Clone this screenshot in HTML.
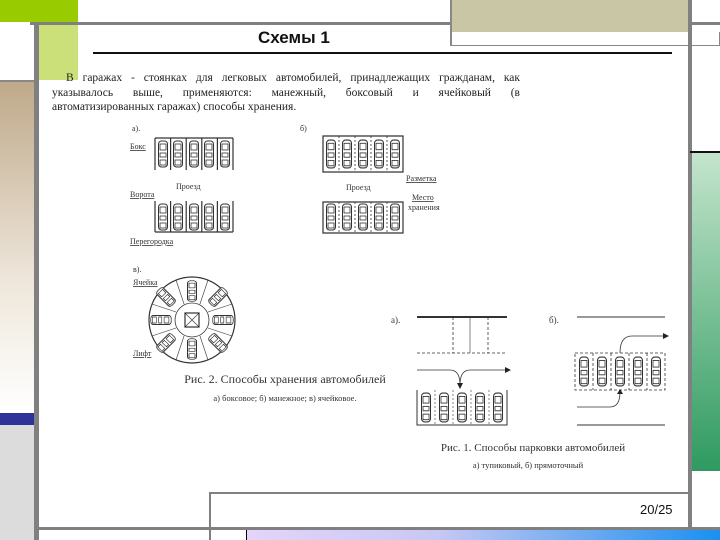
<!DOCTYPE html>
<html><head><meta charset="utf-8"><style>
html,body{margin:0;padding:0;}
body{width:720px;height:540px;position:relative;overflow:hidden;background:#fff;font-family:"Liberation Sans",sans-serif;}
div{position:absolute;}
.ln{left:52px;width:468px;font-size:11.5px;text-align:justify;text-align-last:justify;white-space:nowrap;line-height:14px;font-family:"Liberation Serif",serif;color:#222;}
</style></head><body>
<div style="left:0;top:0;width:78px;height:22px;background:#99cc00"></div>
<div style="left:30px;top:22px;width:690px;height:3px;background:#808080"></div>
<div style="left:450px;top:0;width:238px;height:32px;background:#c9c6a6"></div>
<div style="left:450px;top:32px;width:270px;height:14px;border:1px solid #888;border-top:none;box-sizing:border-box"></div>
<div style="left:450px;top:0;width:2px;height:46px;background:#888"></div>
<div style="left:688px;top:0;width:4px;height:540px;background:#808080"></div>
<div style="left:690px;top:151px;width:30px;height:2px;background:#111"></div>
<div style="left:692px;top:153px;width:28px;height:318px;background:linear-gradient(#c4e5cc,#2e9a60)"></div>
<div style="left:0;top:80px;width:34px;height:2px;background:#888"></div>
<div style="left:0;top:82px;width:34px;height:330px;background:linear-gradient(#bfa98a,#eee6da 60%,#fff)"></div>
<div style="left:0;top:413px;width:34px;height:12px;background:#2e3399"></div>
<div style="left:0;top:425px;width:34px;height:115px;background:#dcdcdc"></div>
<div style="left:34px;top:24px;width:5px;height:516px;background:#808080"></div>
<div style="left:39px;top:25px;width:39px;height:55px;background:#cce07a"></div>
<div style="left:39px;top:527px;width:681px;height:3px;background:#808080"></div>
<div style="left:210px;top:492px;width:479px;height:2px;background:#808080"></div>
<div style="left:209px;top:492px;width:2px;height:48px;background:#808080"></div>
<div style="left:247px;top:530px;width:473px;height:10px;background:linear-gradient(90deg,#e4d4f8,#c8c8f4 40%,#1a90f0)"></div>
<div style="left:246px;top:530px;width:1px;height:10px;background:#000"></div>
<div style="left:640px;top:502px;font-size:13px;color:#111">20/25</div>
<div style="left:258px;top:28px;font-size:17px;font-weight:bold;color:#111">Схемы 1</div>
<div style="left:93px;top:52px;width:579px;height:2px;background:#111"></div>
<div class="ln" style="top:71px;text-indent:14px">В гаражах - стоянках для легковых автомобилей, принадлежащих гражданам, как</div>
<div class="ln" style="top:86px">указывалось выше, применяются: манежный, боксовый и ячейковый (в</div>
<div class="ln" style="top:100px;text-align-last:left">автоматизированных гаражах) способы хранения.</div>
<svg style="position:absolute;left:0;top:0" width="720" height="540" font-family="Liberation Serif, serif" fill="none" stroke="#333">
<defs>
<symbol id="car" viewBox="0 0 12 28" preserveAspectRatio="none"><rect x="1.5" y="1" width="9" height="26" rx="3" stroke="#333" fill="#fff" stroke-width="1"/><rect x="3" y="4" width="6" height="6" stroke="#333" stroke-width="0.8"/><rect x="3" y="13" width="6" height="4" stroke="#333" stroke-width="0.8"/><rect x="3" y="20" width="6" height="5" stroke="#333" stroke-width="0.8"/></symbol>
</defs>
<g stroke-width="1.2">
<path d="M155 138H233M155 138V170M233 138V170M170.6 138V170M186.2 138V170M201.8 138V170M217.4 138V170"/>
<path d="M155 232H233M155 201V232M233 201V232M170.6 201V232M186.2 201V232M201.8 201V232M217.4 201V232"/>
<path d="M323 136H403V172H323Z"/>
<path d="M339 136V172M355 136V172M371 136V172M387 136V172" stroke-dasharray="2 2" stroke-width="0.8"/>
<path d="M323 202H403V233H323Z"/>
<path d="M339 202V233M355 202V233M371 202V233M387 202V233" stroke-dasharray="2 2" stroke-width="0.8"/>
<circle cx="192" cy="320" r="43"/>
<circle cx="192" cy="320" r="17" stroke-width="0.8"/>
<rect x="185" y="313" width="14" height="14"/>
<path d="M185 313L199 327M199 313L185 327" stroke-width="0.6"/>
<g stroke-width="0.6">
<path d="M200 304L208 280M184 336L176 360M208 312L232 304M176 328L152 336M184 304L176 280M200 336L208 360M176 312L152 304M208 328L232 336"/>
</g>
<path d="M417 317H507" stroke-width="2"/>
<path d="M417 353H507M453 317V353M488 317V353" stroke-dasharray="3 2" stroke-width="0.8"/>
<path d="M470 317V353" stroke-width="0.6"/>
<path d="M417 370H450Q460 370 460 385M460 385Q460 370 470 370H505" stroke-width="0.8"/>
<path d="M417 390V425H507V390" stroke-width="1"/>
<path d="M435 390V425M453 390V425M471 390V425M489 390V425" stroke-dasharray="2 2" stroke-width="0.6"/>
<path d="M577 317H665" stroke-width="1"/>
<path d="M577 425H665" stroke-width="1"/>
<path d="M575 353H665V390H575Z M593 353V390M611 353V390M629 353V390M647 353V390" stroke-dasharray="3 2" stroke-width="0.8"/>
<path d="M620 353Q620 336 632 336H663" stroke-width="0.8"/>
<path d="M577 407H610Q620 407 620 392" stroke-width="0.8"/>
</g>
<g fill="#222" stroke="none">
<path d="M505 367L511 370L505 373Z M663 333L669 336L663 339Z M457 383L460 389L463 383Z M617 394L620 389L623 394Z"/>
</g>
<g>
<use href="#car" x="157" y="140" width="12" height="28"/><use href="#car" x="172" y="140" width="12" height="28"/><use href="#car" x="188" y="140" width="12" height="28"/><use href="#car" x="203" y="140" width="12" height="28"/><use href="#car" x="219" y="140" width="12" height="28"/>
<use href="#car" x="157" y="203" width="12" height="28"/><use href="#car" x="172" y="203" width="12" height="28"/><use href="#car" x="188" y="203" width="12" height="28"/><use href="#car" x="203" y="203" width="12" height="28"/><use href="#car" x="219" y="203" width="12" height="28"/>
<use href="#car" x="325" y="139" width="12" height="30"/><use href="#car" x="341" y="139" width="12" height="30"/><use href="#car" x="357" y="139" width="12" height="30"/><use href="#car" x="373" y="139" width="12" height="30"/><use href="#car" x="389" y="139" width="12" height="30"/>
<use href="#car" x="325" y="203" width="12" height="28"/><use href="#car" x="341" y="203" width="12" height="28"/><use href="#car" x="357" y="203" width="12" height="28"/><use href="#car" x="373" y="203" width="12" height="28"/><use href="#car" x="389" y="203" width="12" height="28"/>
<use href="#car" x="420" y="392" width="12" height="31"/><use href="#car" x="438" y="392" width="12" height="31"/><use href="#car" x="456" y="392" width="12" height="31"/><use href="#car" x="474" y="392" width="12" height="31"/><use href="#car" x="492" y="392" width="12" height="31"/>
<use href="#car" x="578" y="356" width="12" height="31"/><use href="#car" x="596" y="356" width="12" height="31"/><use href="#car" x="614" y="356" width="12" height="31"/><use href="#car" x="632" y="356" width="12" height="31"/><use href="#car" x="650" y="356" width="12" height="31"/>
<use href="#car" x="186" y="280" width="12" height="22"/><use href="#car" x="186" y="338" width="12" height="22"/>
<use href="#car" x="155" y="309" width="12" height="22" transform="rotate(90 161 320)"/>
<use href="#car" x="217" y="309" width="12" height="22" transform="rotate(90 223 320)"/>
<use href="#car" x="160" y="286" width="12" height="22" transform="rotate(-45 166 297)"/>
<use href="#car" x="212" y="286" width="12" height="22" transform="rotate(45 218 297)"/>
<use href="#car" x="160" y="332" width="12" height="22" transform="rotate(45 166 343)"/>
<use href="#car" x="212" y="332" width="12" height="22" transform="rotate(-45 218 343)"/>
</g>
<g fill="#333" stroke="none" font-size="8">
<text x="132" y="131">а).</text><text x="300" y="131">б)</text>
<text x="130" y="149" text-decoration="underline">Бокс</text>
<text x="176" y="189">Проезд</text>
<text x="130" y="197" text-decoration="underline">Ворота</text>
<text x="130" y="244" text-decoration="underline">Перегородка</text>
<text x="346" y="190">Проезд</text>
<text x="406" y="181" text-decoration="underline">Разметка</text>
<text x="412" y="200" text-decoration="underline">Место</text><text x="408" y="210">хранения</text>
<text x="133" y="272">в).</text>
<text x="133" y="285" text-decoration="underline">Ячейка</text>
<text x="133" y="356" text-decoration="underline">Лифт</text>
<text x="391" y="323" font-size="9">а).</text>
<text x="549" y="323" font-size="9">б).</text>
<text x="285" y="383" font-size="12" text-anchor="middle">Рис. 2. Способы хранения автомобилей</text>
<text x="285" y="401" font-size="8.5" text-anchor="middle">а) боксовое; б) манежное; в) ячейковое.</text>
<text x="533" y="451" font-size="11" text-anchor="middle">Рис. 1. Способы парковки автомобилей</text>
<text x="528" y="468" font-size="8.5" text-anchor="middle">а) тупиковый, б) прямоточный</text>
</g>
</svg>
</body></html>
